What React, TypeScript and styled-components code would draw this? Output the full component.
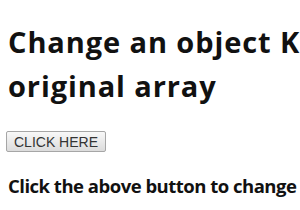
import React from 'react';
import styled, { createGlobalStyle } from 'styled-components';

const Global = createGlobalStyle`
    html, body {
        margin: 0;
        padding: 0;
        overflow: hidden;
        background: #ffffff;
    }
`;

const Page = styled.div`
    width: 780px;
    padding: 20px 8px 0 8px;
    font-family: 'Open Sans', 'Noto Sans', sans-serif;
    color: #111111;
`;

const Title = styled.h1`
    margin: 0;
    width: 740px;
    font-size: 29px;
    line-height: 44px;
    font-weight: 700;
    letter-spacing: 0.9px;
`;

const ActionButton = styled.button`
    margin: 23px 0 0 -2px;
    height: 21px;
    padding: 0 7px;
    font-family: 'Liberation Sans', Arial, sans-serif;
    font-size: 14px;
    color: #333333;
    background: linear-gradient(#f8f8f8, #dcdcdc);
    border: 1px solid #a6a6a6;
    border-radius: 2px;
    cursor: pointer;
`;

const Hint = styled.p`
    margin: 21px 0 0 0;
    font-size: 18.5px;
    font-weight: 700;
    letter-spacing: -0.5px;
    white-space: nowrap;
`;

export default function App() {
    return (
        <>
            <Global />
            <Page>
                <Title>Change an object Key without mutating the original array</Title>
                <ActionButton>CLICK HERE</ActionButton>
                <Hint>Click the above button to change the key of the object.</Hint>
            </Page>
        </>
    );
}
